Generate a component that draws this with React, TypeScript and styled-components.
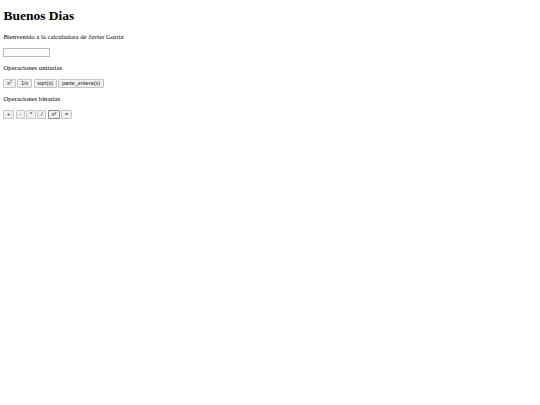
import React from 'react';
import styled, { createGlobalStyle } from 'styled-components';

// reference is a plain default html page at 1280px, shown at 540px (x0.421875)
const GlobalStyle = createGlobalStyle`
  html {
    background: #ffffff;
  }
  body {
    margin: 0;
    padding: 0 3.4px;
    font-family: 'Liberation Serif', 'Times New Roman', serif;
    color: #000;
  }
`;

const Page = styled.div`
  display: flow-root;
`;

const Title = styled.h1`
  font-size: 13.5px;
  font-weight: bold;
  line-height: 15.6px;
  margin: 8.4px 0 9px;
`;

const Text = styled.p`
  font-size: 6.75px;
  line-height: 7.8px;
  margin: 7.1px 0;
`;

const Display = styled.input`
  display: block;
  box-sizing: border-box;
  width: 46.5px;
  height: 8.8px;
  margin: 0;
  padding: 0 1px;
  border: 1px solid #bdbdbd;
  background: #fff;
  font-size: 5.6px;
`;

const Buttons = styled.div`
  display: flex;
  gap: 1.7px;
`;

const Button = styled.button<{ $active?: boolean }>`
  box-sizing: border-box;
  height: 9.4px;
  margin: 0;
  padding: 0 2.6px;
  font-family: 'Liberation Sans', Arial, sans-serif;
  font-size: 5.6px;
  line-height: 1;
  color: #222;
  background: #f0f0f0;
  border: 1px solid ${(p) => (p.$active ? '#8a8a8a' : '#c4c4c4')};
  border-radius: 1px;

  sup {
    font-size: 4px;
    vertical-align: 2px;
    line-height: 0;
  }
`;

const App: React.FC = () => {
  return (
    <>
      <GlobalStyle />
      <Page>
        <Title>Buenos Dias</Title>
        <Text>Bienvenido a la calculadora de Javier Gorriz</Text>
        <Display type="text" />
        <Text>Operaciones unitarias</Text>
        <Buttons>
          <Button>x<sup>2</sup></Button>
          <Button>1/x</Button>
          <Button>sqrt(x)</Button>
          <Button>parte_entera(x)</Button>
        </Buttons>
        <Text>Operaciones binarias</Text>
        <Buttons>
          <Button>+</Button>
          <Button>-</Button>
          <Button>*</Button>
          <Button>/</Button>
          <Button $active>x<sup>y</sup></Button>
          <Button>=</Button>
        </Buttons>
      </Page>
    </>
  );
};

export default App;
